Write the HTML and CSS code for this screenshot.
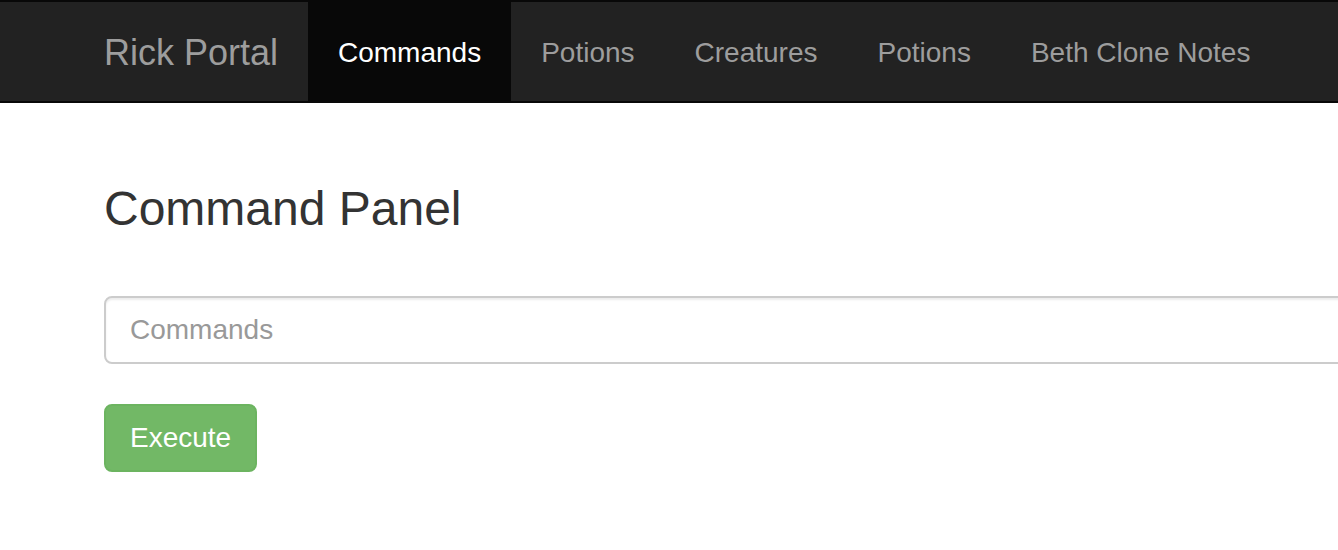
FILE: index.html
```html
<!DOCTYPE html>
<html>
<head>
<meta charset="utf-8">
<link rel="stylesheet" href="styles.css">
</head>
<body>
<nav class="navbar">
  <div class="container nav-inner">
    <a class="brand" href="#">Rick Portal</a>
    <ul class="nav">
      <li class="active"><a href="#">Commands</a></li>
      <li><a href="#">Potions</a></li>
      <li><a href="#">Creatures</a></li>
      <li><a href="#">Potions</a></li>
      <li><a href="#">Beth Clone Notes</a></li>
    </ul>
  </div>
</nav>
<main class="container content">
  <h3 class="title">Command Panel</h3>
  <input class="field" type="text" placeholder="Commands">
  <button class="btn">Execute</button>
</main>
</body>
</html>
```
FILE: styles.css
```css
* { box-sizing: border-box; }
html, body { margin: 0; padding: 0; background: #fff; }
body {
  font-family: "Liberation Sans", Arial, sans-serif;
  font-size: 28px;
  color: #333;
  overflow: hidden;
}
.navbar {
  background: #222;
  border-top: 2px solid #080808;
  border-bottom: 2px solid #080808;
  height: 103px;
}
.container { padding-left: 74px; }
.nav-inner { display: flex; height: 99px; }
.brand {
  display: block;
  flex-shrink: 0;
  white-space: nowrap;
  padding: 1px 30px 0;
  height: 99px;
  line-height: 99px;
  font-size: 36px;
  color: #9d9d9d;
  text-decoration: none;
  width: 234px;
}
.nav { display: flex; list-style: none; margin: 0; padding: 0; flex-shrink: 0; }
.nav li { flex-shrink: 0; }
.nav li a {
  display: block;
  white-space: nowrap;
  padding: 1px 30px 0;
  height: 99px;
  line-height: 99px;
  color: #9d9d9d;
  text-decoration: none;
  font-size: 28px;
}
.nav li.active a { background: #080808; color: #fff; }
.content { padding-left: 104px; padding-top: 0; }
.title {
  margin: 78px 0 0;
  font-size: 48px;
  font-weight: 500;
  line-height: 56px;
  color: #333;
}
.field {
  display: block;
  margin-top: 59px;
  width: 1300px;
  height: 68px;
  padding: 0 24px;
  border: 2px solid #ccc;
  border-radius: 8px;
  font-family: inherit;
  font-size: 28px;
  color: #555;
  box-shadow: inset 0 2px 2px rgba(0,0,0,.075);
}
.field::placeholder { color: #999; }
.btn {
  display: block;
  margin-top: 40px;
  height: 68px;
  padding: 0 24px;
  border: 2px solid #6cb460;
  border-radius: 8px;
  background: #72b866;
  color: #fff;
  font-family: inherit;
  font-size: 28px;
}
```
